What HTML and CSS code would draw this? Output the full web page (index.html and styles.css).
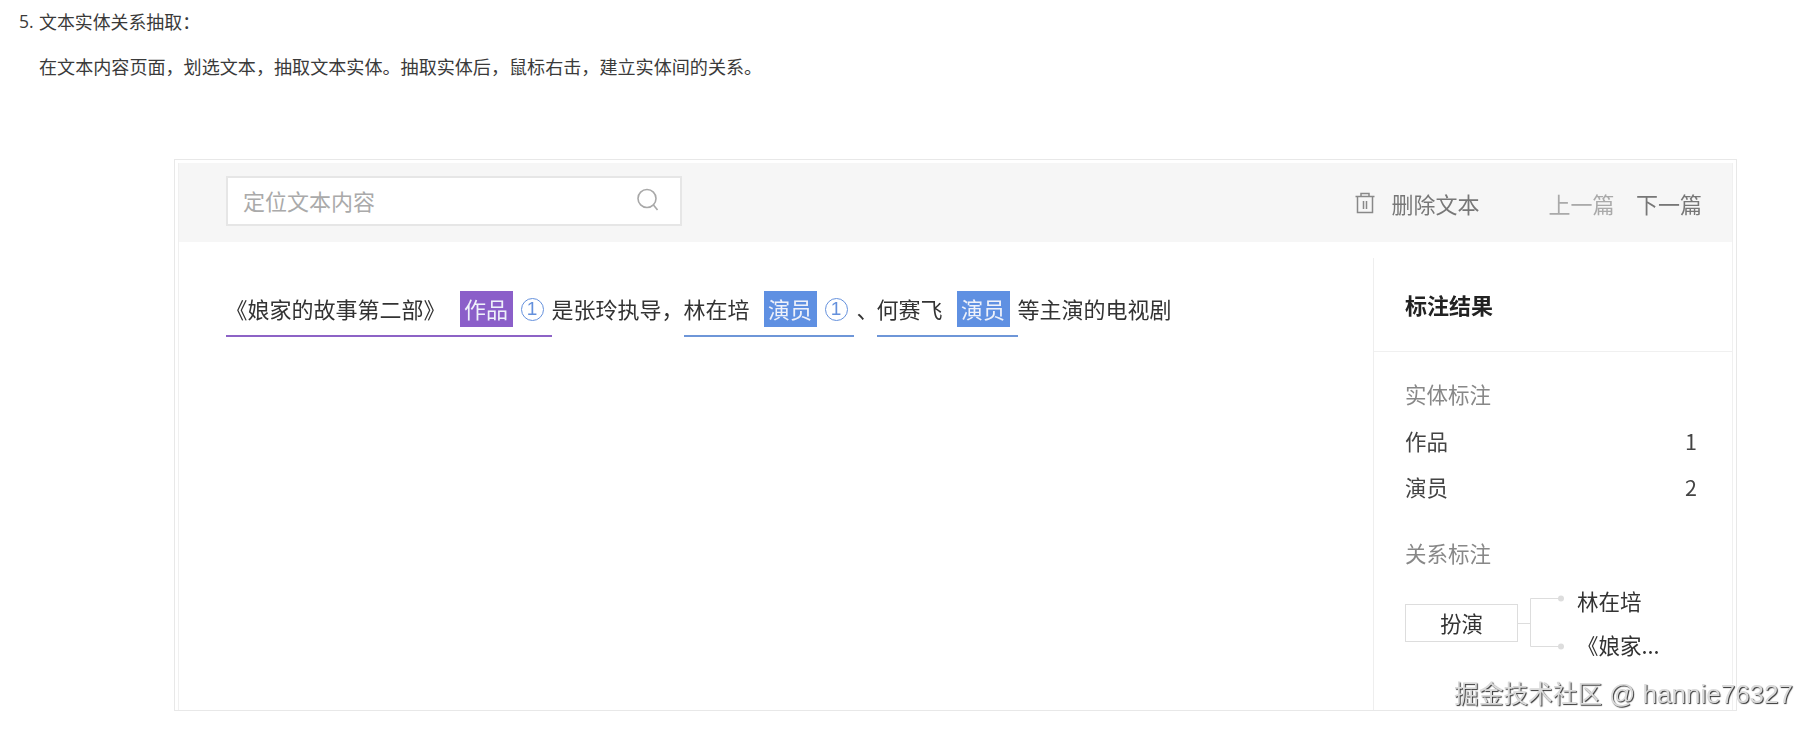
FILE: index.html
```html
<!DOCTYPE html>
<html lang="zh">
<head>
<meta charset="utf-8">
<title>文本实体关系抽取</title>
<link rel="stylesheet" href="styles.css">
</head>
<body>
<p class="step"><span class="num">5.</span>文本实体关系抽取：</p>
<p class="desc">在文本内容页面，划选文本，抽取文本实体。抽取实体后，鼠标右击，建立实体间的关系。</p>
<div class="frame">
  <div class="shot">
    <div class="toolbar">
      <div class="search">
        <span class="placeholder">定位文本内容</span>
        <svg class="search-icon" width="26" height="26" viewBox="0 0 26 26"><circle cx="12" cy="11.500" r="9" fill="none" stroke="#a8a8a8" stroke-width="1.600"/><path d="M18.500 18 L22.500 23" stroke="#a8a8a8" stroke-width="1.600" fill="none"/></svg>
      </div>
      <div class="tools">
        <span class="delete">
          <svg width="20" height="22" viewBox="0 0 20 22"><path d="M0.500 4.500H19.500M6 4.500V1.500H14V4.500M2.500 4.500V20.500H17.500V4.500M8.500 9V17M11.500 9V17" fill="none" stroke="#888" stroke-width="1.500"/></svg>
          删除文本
        </span>
        <span class="prev">上一篇</span>
        <span class="next">下一篇</span>
      </div>
    </div>
    <div class="content">
      <div class="doc">
        <div class="ent ent-work"><span class="txt">《娘家的故事第二部》</span><span class="tag tag-work">作品</span><span class="badge">1</span></div>
        <span class="txt">是张玲执导，</span>
        <div class="ent ent-actor"><span class="txt">林在培</span><span class="tag tag-actor">演员</span><span class="badge">1</span></div>
        <span class="txt sep">、</span>
        <div class="ent ent-actor ent-short"><span class="txt">何赛飞</span><span class="tag tag-actor">演员</span></div>
        <span class="txt">等主演的电视剧</span>
      </div>
      <aside class="side">
        <div class="side-head">标注结果</div>
        <div class="side-body">
          <div class="label">实体标注</div>
          <div class="row"><span>作品</span><span>1</span></div>
          <div class="row"><span>演员</span><span>2</span></div>
          <div class="label label-rel">关系标注</div>
          <div class="rel">
            <div class="rel-box">扮演</div>
            <svg class="rel-lines" width="59" height="88" viewBox="0 0 59 88"><path d="M0 43.500H12.500M42 18.500H12.500V66.500H42" fill="none" stroke="#ddd" stroke-width="1"/><circle cx="43" cy="18.500" r="3" fill="#ddd"/><circle cx="43" cy="66.500" r="3" fill="#ddd"/></svg>
            <div class="rel-targets"><div>林在培</div><div>《娘家...</div></div>
          </div>
        </div>
      </aside>
    </div>
  </div>
</div>
<div class="watermark">掘金技术社区 <span class="wm-name">@ hannie76327</span></div>
</body>
</html>
```
FILE: styles.css
```css
* { box-sizing: border-box; }
html, body { margin: 0; background: #fff; }
body {
  position: relative;
  height: 729px;
  overflow: hidden;
  font-family: "Noto Sans CJK SC", "Noto Sans", sans-serif;
  color: #333;
}
p { margin: 0; }
.step, .desc { color: #3a3a3a; }
.step { font-size: 17.900px; padding-left: 19px; display: flex; height: 42px; line-height: 42px; }
.num { width: 20px; font-family: "Open Sans", sans-serif; font-size: 17.500px; }
.desc { font-size: 18.080px; padding-left: 39px; margin-top: 1px; height: 46px; line-height: 46px; }

.frame {
  margin: 70px 0 0 174px;
  width: 1563px;
  height: 552px;
  border: 1px solid #e8e8e8;
  padding: 3px 3px 0;
  filter: blur(0.4px);
}
.shot { height: 100%; border-left: 1px solid #f0f0f0; border-right: 1px solid #f0f0f0; display: flex; flex-direction: column; }

.toolbar {
  height: 79px;
  background: #f6f6f6;
  display: flex;
  align-items: center;
  justify-content: space-between;
  padding: 0 30px 3px 46.500px;
  font-size: 22px;
}
.search {
  width: 456.500px;
  height: 50px;
  background: #fff;
  border: 2px solid #e6e6e6;
  display: flex;
  align-items: center;
  justify-content: space-between;
  padding: 0 19px 2px 15.500px;
}
.placeholder { color: #aaa; }
.search-icon { flex: none; }
.tools { display: flex; align-items: center; margin-top: 3px; }
.delete { display: flex; align-items: center; gap: 16.500px; color: #777; margin-right: 69px; }
.prev { color: #aaa; margin-right: 21.500px; }
.next { color: #777; }

.content { flex: 1; display: flex; min-height: 0; }
.doc {
  flex: 1;
  display: flex;
  align-items: flex-start;
  padding: 49px 0 0 46.500px;
  font-size: 22px;
  color: #333;
}
.txt { line-height: 34px; white-space: nowrap; }
.ent { display: flex; align-items: flex-start; padding-bottom: 8px; border-bottom: 2px solid; }
.ent-work { border-color: #8d63c6; width: 326px; }
.ent-actor { border-color: #6e96d8; width: 170px; }
.ent-short { width: 141px; }
.sep { width: 23px; padding-left: 3px; }
.tag { height: 36px; line-height: 34px; width: 53px; text-align: center; color: #eef1fa; margin-left: 14px; flex: none; }
.tag-work { background: #8b5fc9; }
.tag-actor { background: #5f90e2; }
.badge {
  flex: none;
  width: 23px;
  height: 23px;
  margin: 7px 0 0 8px;
  border: 1.800px solid #6490dc;
  border-radius: 50%;
  color: #6490dc;
  font-size: 19px;
  line-height: 20px;
  text-align: center;
  font-family: "Liberation Sans", sans-serif;
}

.side { width: 360px; flex: none; margin: 16px -1px 0 0; border-left: 1px solid #eee; font-size: 20px; }
.side-head {
  height: 94px;
  border-bottom: 1px solid #f0f0f0;
  padding: 0 0 2px 31px;
  display: flex;
  align-items: center;
  font-size: 22px;
  font-weight: 700;
  color: #222;
}
.side-body { padding: 22px 36px 0 31px; font-size: 21.500px; }
.label { height: 40px; line-height: 40px; color: #888; }
.label-rel { margin-top: 23px; }
.row { height: 46px; line-height: 46px; display: flex; justify-content: space-between; color: #444; }
.label + .row { margin-top: 4px; }
.rel { display: flex; align-items: center; margin-top: 7px; }
.rel-box {
  width: 113px;
  height: 38px;
  border: 1px solid #ddd;
  line-height: 35px;
  text-align: center;
  color: #333;
  margin-top: -2px;
}
.rel-lines { flex: none; }
.rel-targets { color: #333; white-space: nowrap; }
.rel-targets div { height: 44px; line-height: 42px; }

.watermark {
  position: absolute;
  right: 21px;
  top: 677px;
  font-family: "Liberation Sans", "Noto Sans CJK SC", sans-serif;
  font-size: 24.700px;
  line-height: 34px;
  white-space: nowrap;
  color: #dadada;
  text-shadow: 1px 1px 1px #333, -1px -1px 0 #fff;
}
.wm-name { font-size: 26px; }
```
